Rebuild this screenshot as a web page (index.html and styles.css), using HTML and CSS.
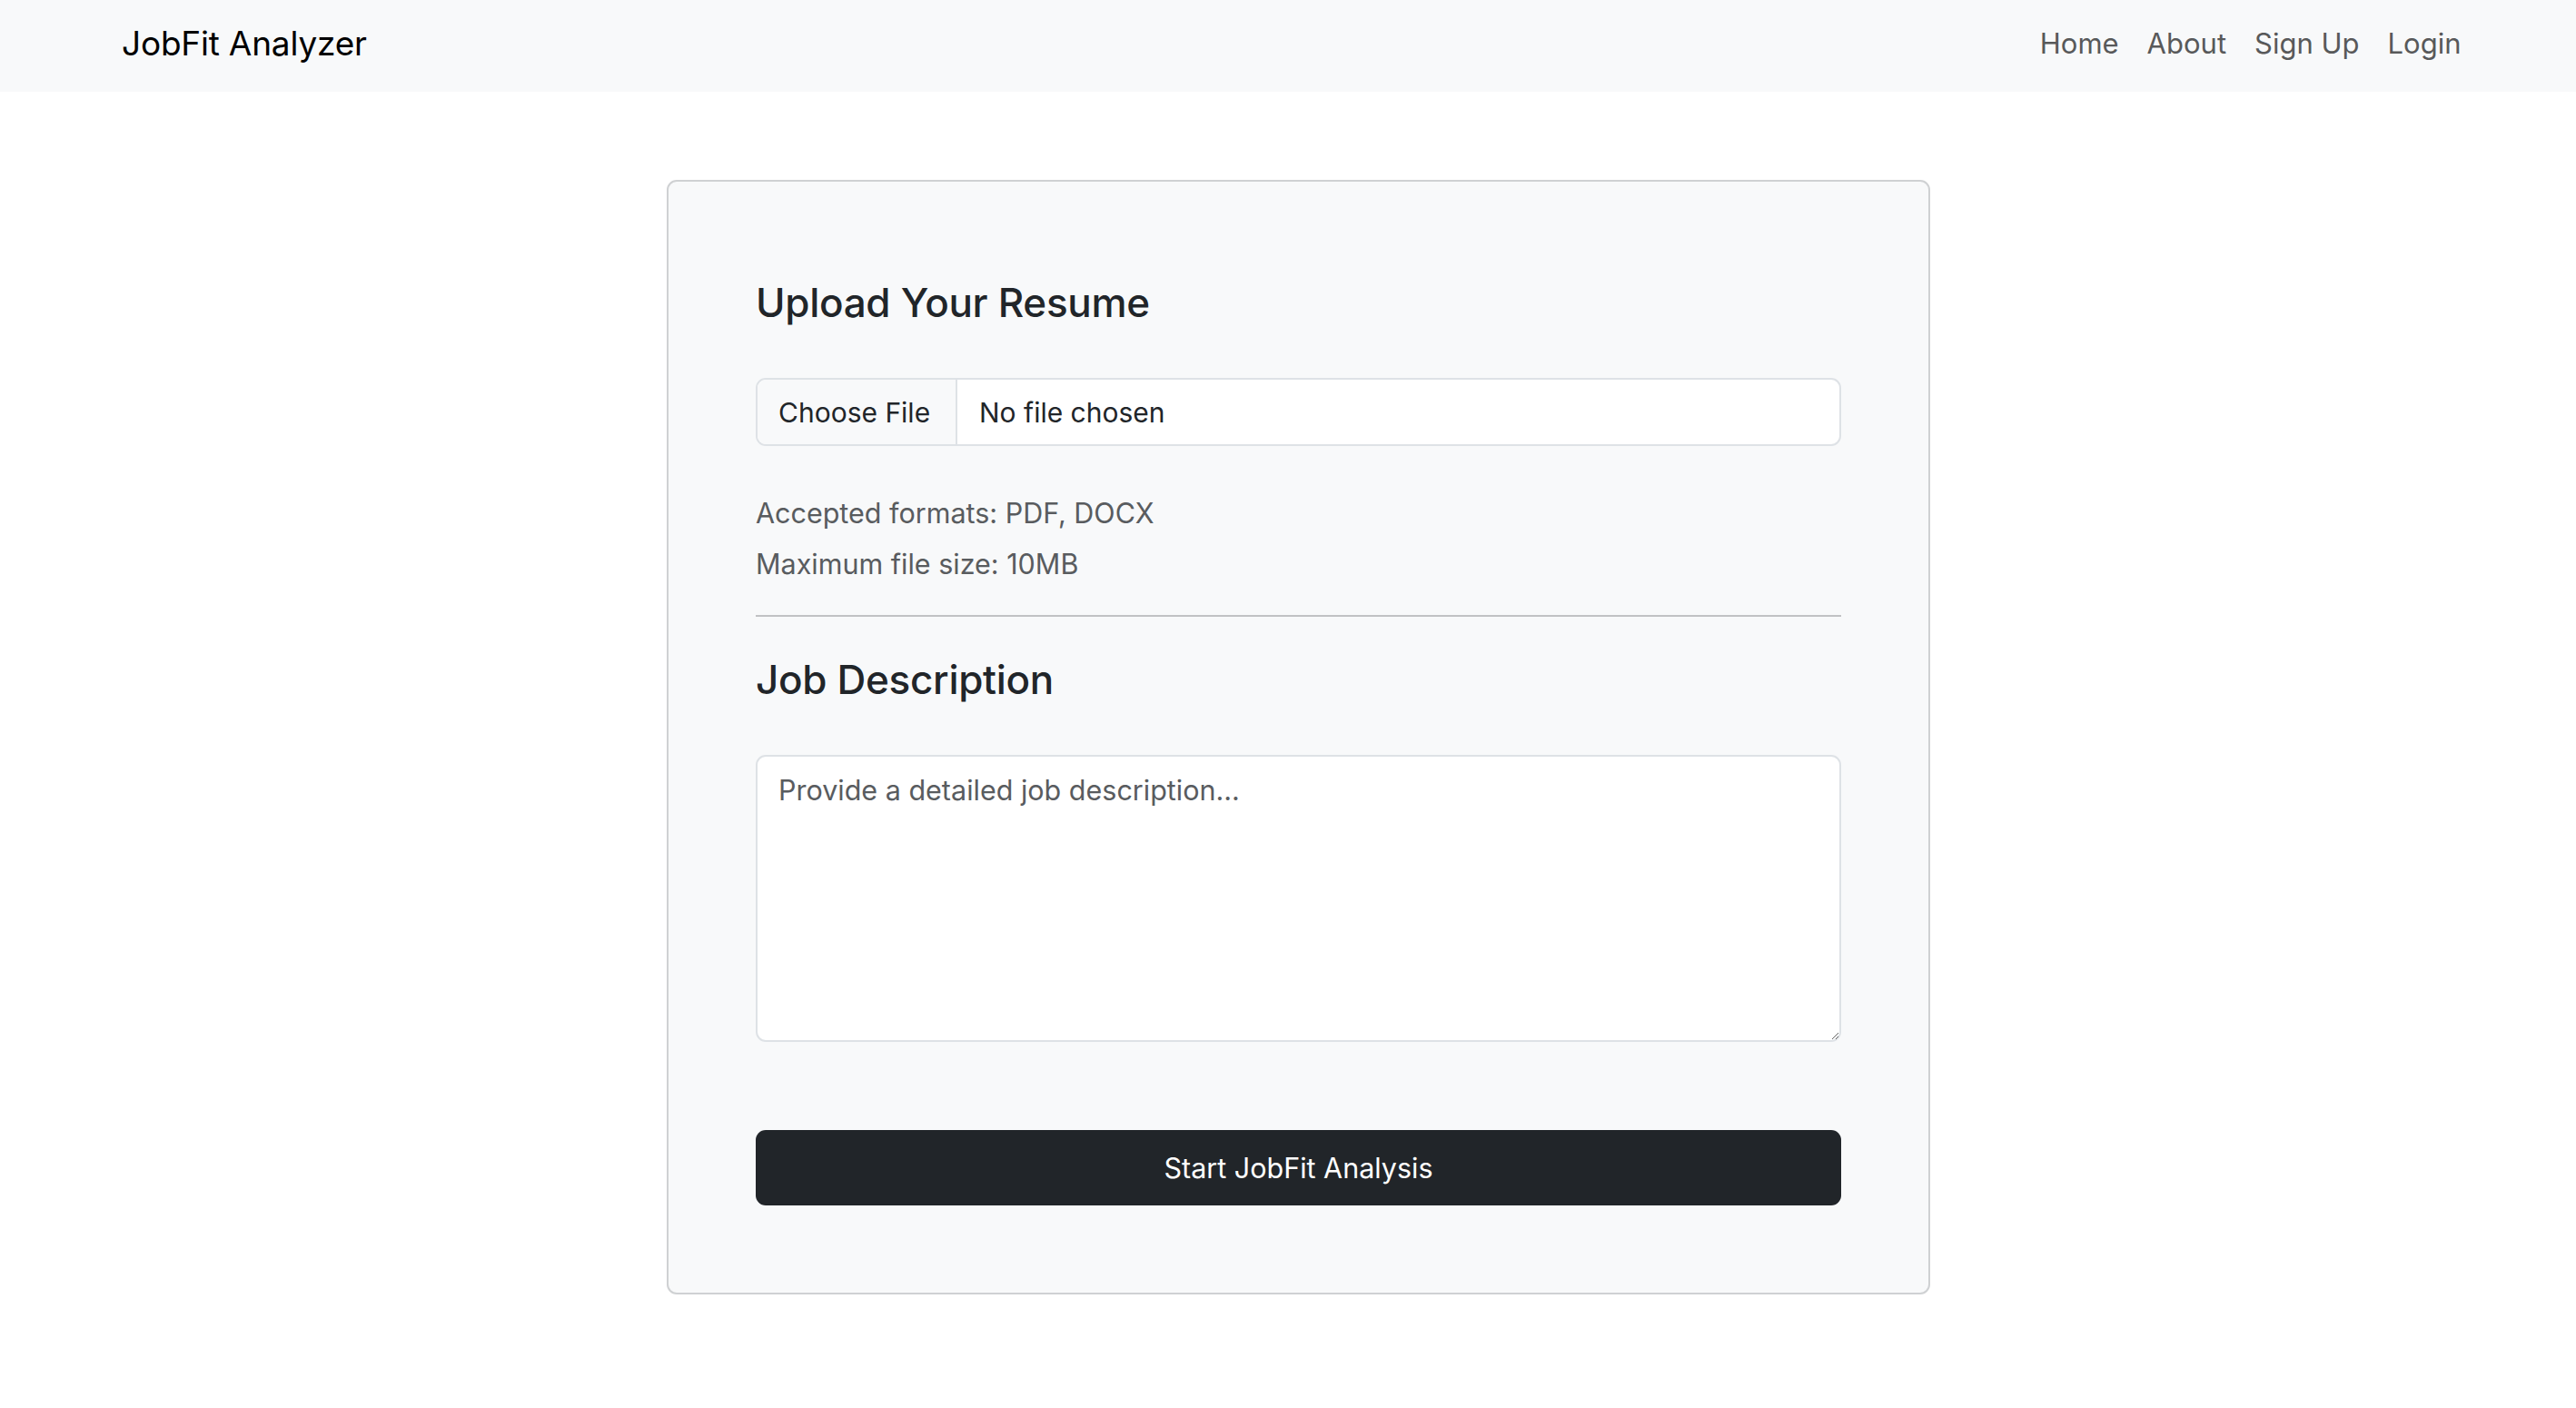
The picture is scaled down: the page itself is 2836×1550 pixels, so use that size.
FILE: index.html
```html
<!DOCTYPE html>
<html lang="en">
<head>
<meta charset="utf-8">
<title>JobFit Analyzer</title>
<link rel="stylesheet" href="styles.css">
</head>
<body>
<nav class="navbar">
  <a class="brand" href="#">JobFit Analyzer</a>
  <div class="nav">
    <a href="#">Home</a>
    <a href="#">About</a>
    <a href="#">Sign Up</a>
    <a href="#">Login</a>
  </div>
</nav>
<main class="main">
  <form class="card">
    <h2 class="title first">Upload Your Resume</h2>
    <label class="file">
      <input type="file" class="file-input" accept=".pdf,.docx">
      <span class="file-btn">Choose File</span>
      <span class="file-name">No file chosen</span>
    </label>
    <p class="hint first-hint">Accepted formats: PDF, DOCX</p>
    <p class="hint">Maximum file size: 10MB</p>
    <hr class="divider">
    <h2 class="title">Job Description</h2>
    <textarea class="desc" placeholder="Provide a detailed job description..."></textarea>
    <button type="button" class="submit">Start JobFit Analysis</button>
  </form>
</main>
</body>
</html>
```
FILE: styles.css
```css
html, body {
  margin: 0;
  padding: 0;
}
body {
  font-family: Inter, "Liberation Sans", sans-serif;
  color: #212529;
  background: #ffffff;
}
.navbar {
  height: 101px;
  background: #f8f9fa;
  display: flex;
  align-items: center;
  justify-content: space-between;
  padding: 0 111px 7px 134px;
  box-sizing: border-box;
}
.brand {
  font-size: 37px;
  color: #000000;
  text-decoration: none;
  letter-spacing: -0.2px;
}
.nav {
  display: flex;
}
.nav a {
  font-size: 31px;
  color: #58595a;
  text-decoration: none;
  padding: 0 15.5px;
}
.main {
  display: flex;
  justify-content: center;
  padding: 97px 0 0 23px;
}
.card {
  width: 1391px;
  box-sizing: border-box;
  border: 2px solid #cfd1d3;
  border-radius: 11px;
  background: #f8f9fa;
  padding: 96px;
  display: flex;
  flex-direction: column;
  margin: 0;
}
.title {
  font-size: 44px;
  line-height: 52px;
  font-weight: 500;
  margin: 0 0 57px;
  color: #212529;
  letter-spacing: -0.3px;
}
.title.first {
  margin-top: 11px;
}
.file {
  height: 75px;
  box-sizing: border-box;
  border: 2px solid #dee2e6;
  border-radius: 11px;
  background: #ffffff;
  display: flex;
  overflow: hidden;
  font-size: 30px;
  cursor: pointer;
}
.file-input {
  display: none;
}
.file-btn {
  flex: 0 0 220px;
  box-sizing: border-box;
  background: #f8f9fa;
  border-right: 2px solid #dee2e6;
  display: flex;
  align-items: center;
  padding-left: 23px;
  color: #212529;
}
.file-name {
  display: flex;
  align-items: center;
  padding-left: 24px;
  color: #212529;
}
.hint {
  margin: 12px 0 0;
  font-size: 30.5px;
  line-height: 44px;
  color: #595c5f;
}
.hint.first-hint {
  margin-top: 52px;
}
.divider {
  margin: 34px 0 43px;
  border: 0;
  border-top: 2px solid #c1c2c4;
  height: 0;
}
.desc {
  height: 316px;
  box-sizing: border-box;
  width: 100%;
  border: 2px solid #dee2e6;
  border-radius: 11px;
  background: #ffffff;
  padding: 15px 23px;
  font-family: Inter, "Liberation Sans", sans-serif;
  font-size: 30.5px;
  line-height: 44px;
  color: #212529;
  resize: vertical;
  margin: 0 0 97px;
  outline: none;
}
.desc::placeholder {
  color: #595c5f;
}
.submit {
  height: 83px;
  width: 100%;
  border: 0;
  border-radius: 11px;
  background: #212529;
  color: #ffffff;
  font-family: Inter, "Liberation Sans", sans-serif;
  font-size: 30.5px;
  cursor: pointer;
}
```
